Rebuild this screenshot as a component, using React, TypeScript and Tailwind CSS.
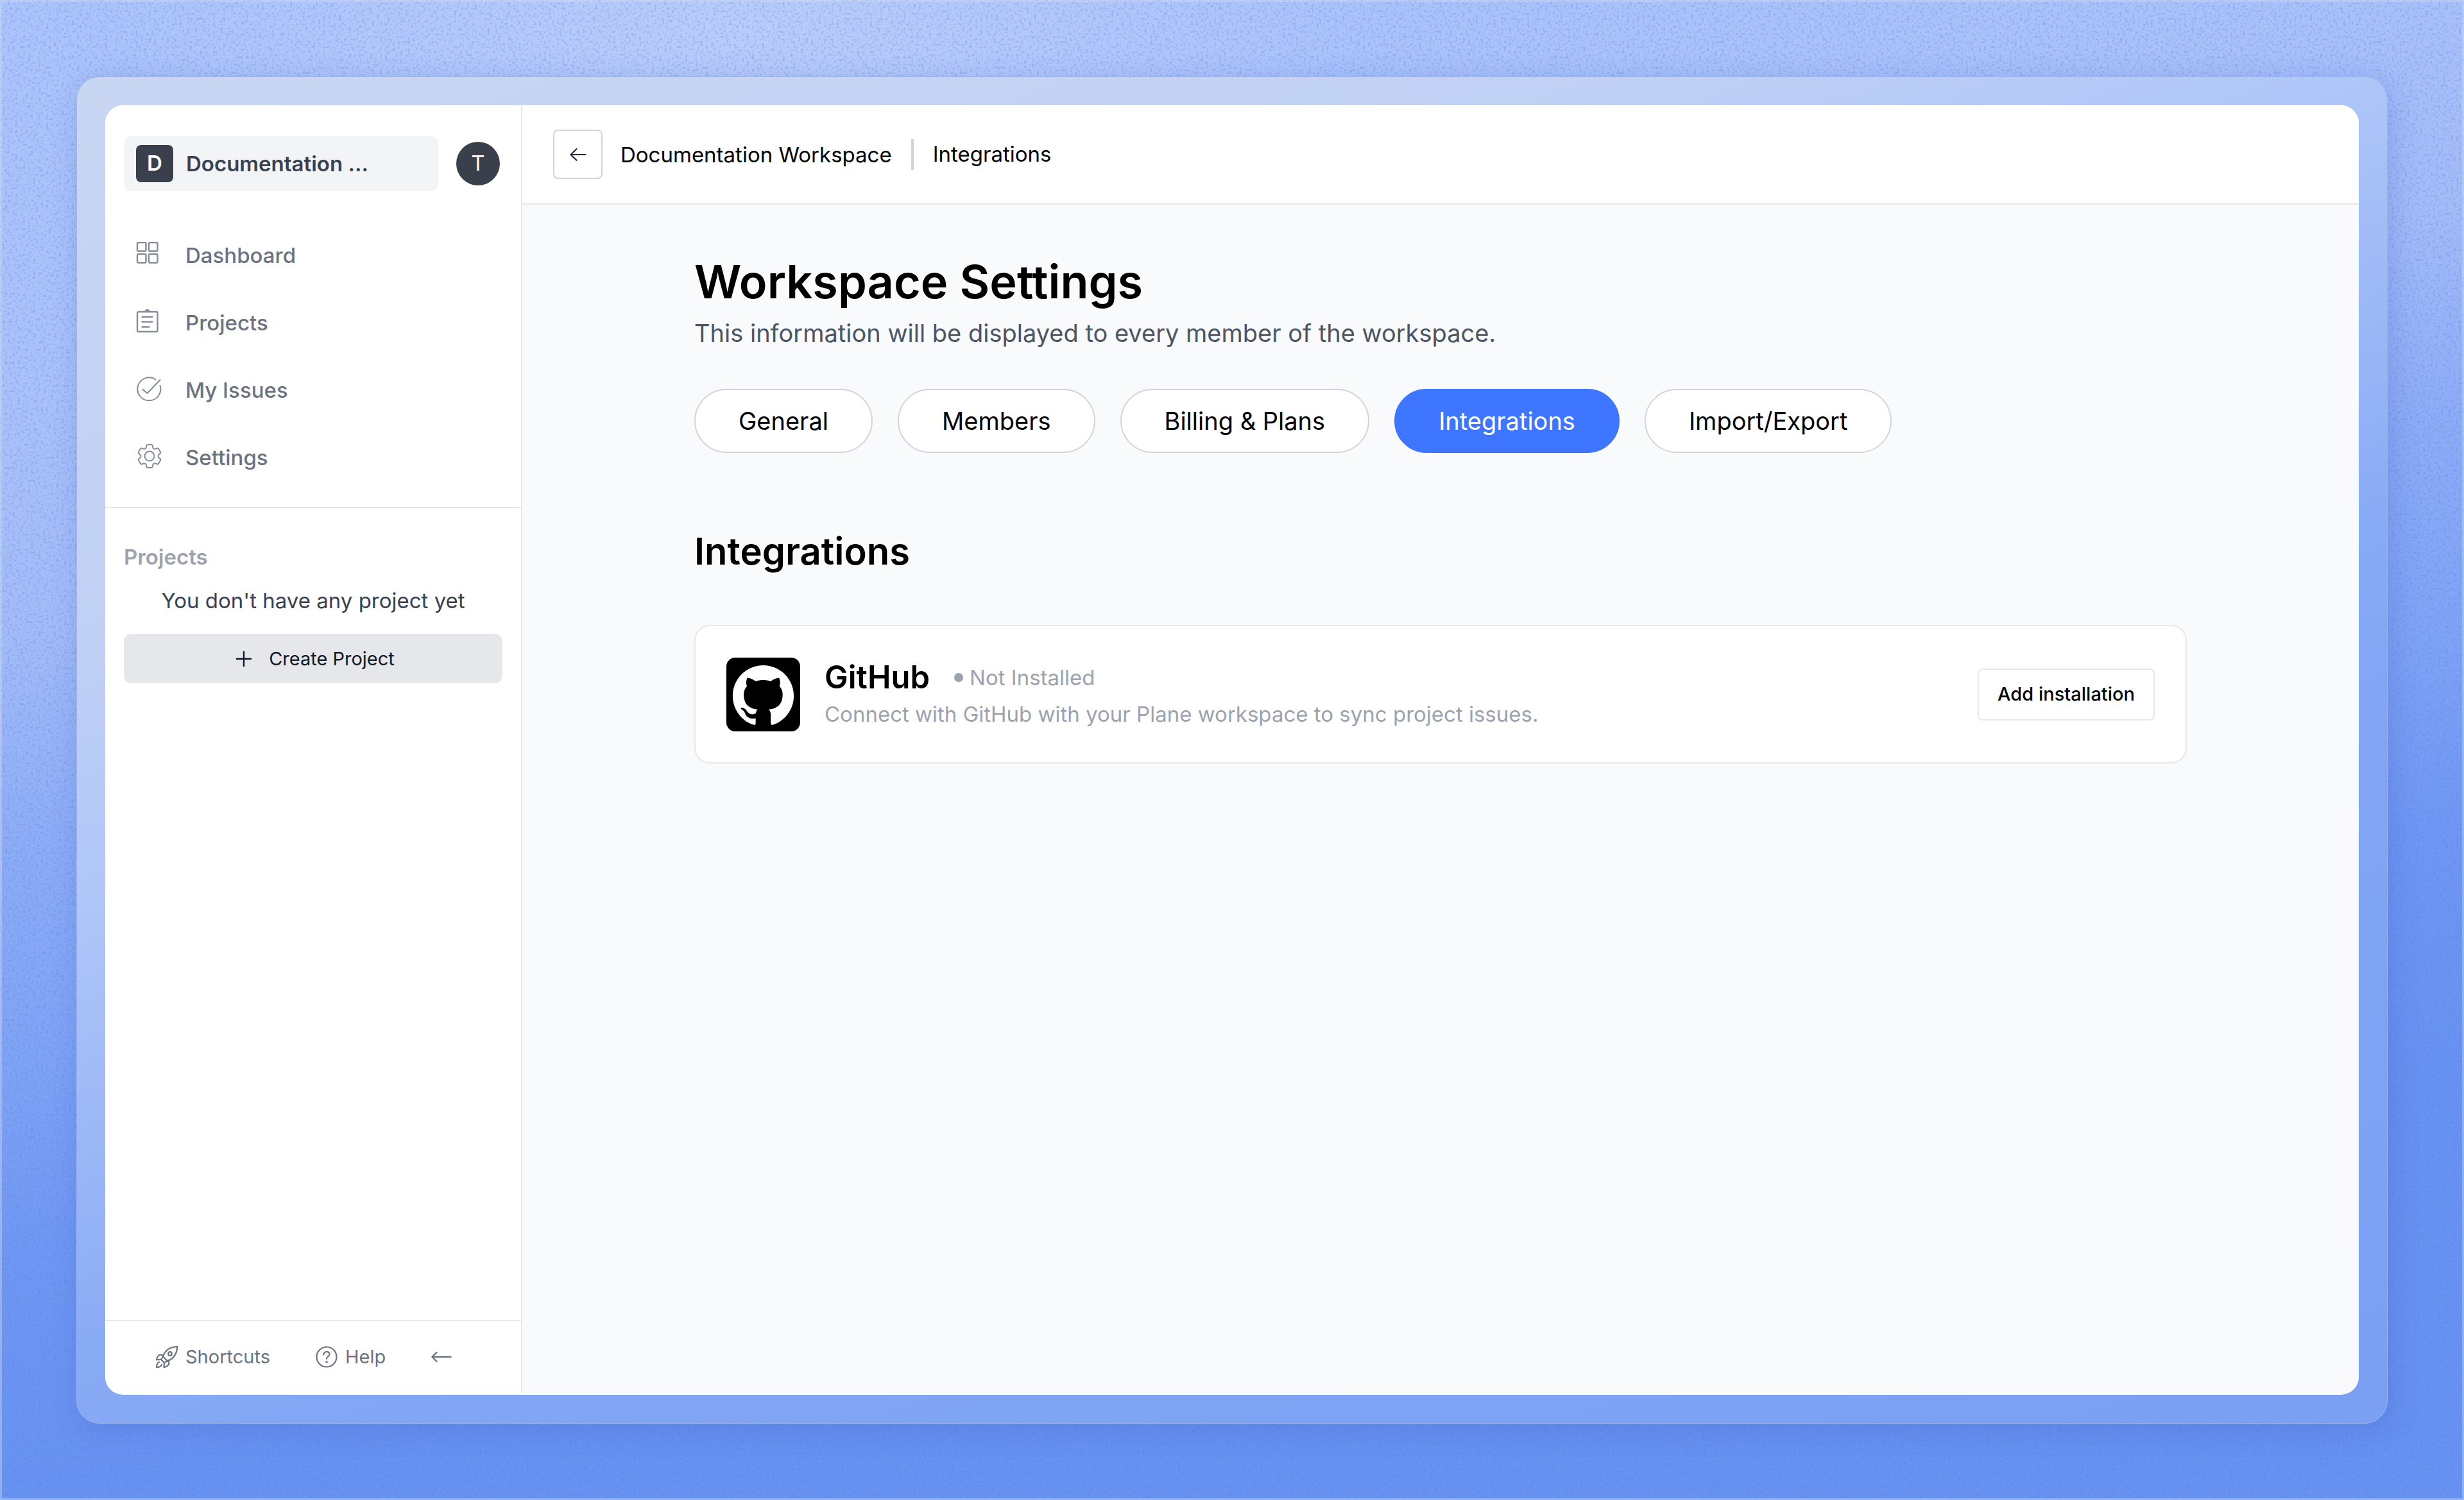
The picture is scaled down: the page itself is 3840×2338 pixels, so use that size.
import { Plus } from "lucide-react";

const NAV = ["Dashboard", "Projects", "My Issues", "Settings"] as const;
const TABS = ["General", "Members", "Billing & Plans", "Integrations", "Import/Export"];

const stroke = {
  fill: "none",
  stroke: "currentColor",
  strokeLinecap: "round" as const,
  strokeLinejoin: "round" as const,
};

function GridIcon() {
  return (
    <svg viewBox="0 0 40 40" className="size-10" strokeWidth="2.400" {...stroke} aria-hidden="true">
      <rect x="2" y="1" width="13.500" height="13.500" rx="2" />
      <rect x="20" y="1" width="13.500" height="13.500" rx="2" />
      <rect x="2" y="19" width="13.500" height="13.500" rx="2" />
      <rect x="20" y="19" width="13.500" height="13.500" rx="2" />
    </svg>
  );
}

function ClipboardIcon() {
  return (
    <svg viewBox="0 0 40 40" className="size-10" strokeWidth="2.400" {...stroke} aria-hidden="true">
      <rect x="2" y="4" width="31.500" height="31" rx="2" />
      <path d="M14.500 4a3 3 0 0 1 6 0M9.500 12h16M9.500 19.500h16M9.500 27.500h11" />
    </svg>
  );
}

function CheckIcon() {
  return (
    <svg viewBox="0 0 40 40" className="size-10" strokeWidth="2" {...stroke} aria-hidden="true">
      <path d="M30.500 4.500A18 18 0 1 0 37.500 14M10.500 20l7 6L37.500 5" />
    </svg>
  );
}

function GearIcon() {
  return (
    <svg viewBox="1.5 2.5 20 20" className="size-10" strokeWidth="1" {...stroke} aria-hidden="true">
      <path d="M9.594 3.940c.09-.542.56-.940 1.110-.940h2.593c.550 0 1.020.398 1.110.940l.213 1.281c.063.374.313.686.645.870.074.040.147.083.220.127.325.196.720.257 1.075.124l1.217-.456a1.125 1.125 0 0 1 1.370.490l1.296 2.247a1.125 1.125 0 0 1-.260 1.431l-1.003.827c-.293.241-.438.613-.430.992a7.723 7.723 0 0 1 0 .255c-.008.378.137.750.430.991l1.004.827c.424.350.534.955.260 1.430l-1.298 2.247a1.125 1.125 0 0 1-1.369.491l-1.217-.456c-.355-.133-.750-.072-1.076.124a6.470 6.470 0 0 1-.220.128c-.331.183-.581.495-.644.869l-.213 1.281c-.090.543-.560.940-1.110.940h-2.594c-.550 0-1.019-.398-1.110-.940l-.213-1.281c-.062-.374-.312-.686-.644-.870a6.520 6.520 0 0 1-.220-.127c-.325-.196-.720-.257-1.076-.124l-1.217.456a1.125 1.125 0 0 1-1.369-.490l-1.297-2.247a1.125 1.125 0 0 1 .260-1.431l1.004-.827c.292-.240.437-.613.430-.991a6.932 6.932 0 0 1 0-.255c.007-.380-.138-.751-.430-.992l-1.004-.827a1.125 1.125 0 0 1-.260-1.430l1.297-2.247a1.125 1.125 0 0 1 1.370-.491l1.216.456c.356.133.751.072 1.076-.124.072-.044.146-.086.220-.128.332-.183.582-.495.644-.869l.214-1.280Z" />
      <circle cx="12" cy="12" r="3.700" />
    </svg>
  );
}

function RocketIcon() {
  return (
    <svg viewBox="0 0 34 34" className="size-[34px]" strokeWidth="2.200" {...stroke} aria-hidden="true">
      <path d="M11 16.500C14 7 22 1.500 33 1c0 11-5.500 18.500-15 22.500Z" />
      <path d="M12 14.500 6.500 13.500C3 15 1.500 18 1 21.500l7-.500M19.500 22l1 5.500c-1.500 3.500-4 5-8 5.500l.500-7" />
      <path d="M11 16.500 8 21l5 5 5-2.500" />
      <circle cx="22" cy="12" r="2.800" />
      <path d="M5 25c-3 1-4 4-4 8 4 0 7-1 8-4" />
    </svg>
  );
}

function HelpIcon() {
  return (
    <svg viewBox="0 0 34 34" className="size-[34px]" strokeWidth="2.200" {...stroke} aria-hidden="true">
      <circle cx="17" cy="17" r="15.500" />
      <path d="M12.500 13.500c0-6 9-6 9-.5 0 3.500-4.500 3.500-4.500 7" />
      <circle cx="17" cy="25" r="0.700" fill="currentColor" />
    </svg>
  );
}

function LongArrow() {
  return (
    <svg viewBox="0 0 32 18" className="h-[18px] w-8" strokeWidth="2.400" {...stroke} aria-hidden="true">
      <path d="M30.500 9H1.500M8.500 2l-7 7 7 7" />
    </svg>
  );
}

function BackArrow() {
  return (
    <svg viewBox="0 0 26 20" className="h-5 w-[26px]" strokeWidth="2.200" {...stroke} aria-hidden="true">
      <path d="M24.500 10H1.500M10.500 1.200 1.500 10l9 8.800" />
    </svg>
  );
}

function GithubLogo() {
  return (
    <svg viewBox="0 0 116 116" className="size-[115px] shrink-0" role="img" aria-label="GitHub">
      <rect width="116" height="116" rx="14" fill="#000" />
      <g transform="translate(10 11) scale(4)">
        <path
          fill="#fff"
          d="M12 .297c-6.630 0-12 5.373-12 12 0 5.303 3.438 9.800 8.205 11.385.600.113.820-.258.820-.577 0-.285-.010-1.040-.015-2.040-3.338.724-4.042-1.610-4.042-1.610C4.422 18.070 3.633 17.700 3.633 17.700c-1.087-.744.084-.729.084-.729 1.205.084 1.838 1.236 1.838 1.236 1.070 1.835 2.809 1.305 3.495.998.108-.776.417-1.305.760-1.605-2.665-.300-5.466-1.332-5.466-5.930 0-1.310.465-2.380 1.235-3.220-.135-.303-.540-1.523.105-3.176 0 0 1.005-.322 3.300 1.230.960-.267 1.980-.399 3-.405 1.020.006 2.040.138 3 .405 2.280-1.552 3.285-1.230 3.285-1.230.645 1.653.240 2.873.120 3.176.765.840 1.230 1.910 1.230 3.220 0 4.610-2.805 5.625-5.475 5.920.420.360.810 1.096.810 2.220 0 1.606-.015 2.896-.015 3.286 0 .315.210.690.825.570C20.565 22.092 24 17.592 24 12.297c0-6.627-5.373-12-12-12"
        />
      </g>
    </svg>
  );
}

const NAV_ICONS = {
  Dashboard: GridIcon,
  Projects: ClipboardIcon,
  "My Issues": CheckIcon,
  Settings: GearIcon,
};

function Grain() {
  return (
    <svg className="pointer-events-none absolute inset-0 size-full" aria-hidden="true">
      <filter id="grain" x="0" y="0" width="100%" height="100%" colorInterpolationFilters="sRGB">
        <feTurbulence type="fractalNoise" baseFrequency="0.25" numOctaves="3" seed="4" />
        <feColorMatrix values="0 0 0 0 0.36  0 0 0 0 0.5  0 0 0 0 0.85  4 0 0 0 -2" />
      </filter>
      <rect width="100%" height="100%" filter="url(#grain)" opacity="0.3" />
    </svg>
  );
}

function Sidebar() {
  return (
    <aside className="flex w-[650px] shrink-0 flex-col border-r-2 border-[#e5e7eb] bg-white">
      <div className="flex items-center gap-7 pt-12 pr-[33px] pl-[29px]">
        <button className="flex h-[86px] flex-1 items-center gap-5 rounded-xl bg-[#f3f4f6] px-[19px] text-left">
          <span className="flex size-[58px] items-center justify-center rounded-lg bg-[#3a404b] text-[33px] font-semibold text-white">
            D
          </span>
          <span className="text-[33px] leading-12 font-semibold text-[#374151]">Documentation ...</span>
        </button>
        <button className="flex size-[68px] items-center justify-center rounded-full bg-[#3a404b] text-[33px] text-white">
          T
        </button>
      </div>
      <nav className="mt-12 flex flex-col border-b-2 border-[#e5e7eb] pb-6">
        {NAV.map((name) => {
          const Icon = NAV_ICONS[name];
          return (
            <a key={name} href="#" className="flex h-[105px] items-center pl-12 text-[33px] font-medium text-[#6b7280]">
              <span className="flex w-[77px] items-center pb-1 text-[#858c98]">
                <Icon />
              </span>
              {name}
            </a>
          );
        })}
      </nav>
      <section className="flex flex-1 flex-col px-[29px] pt-[52px]">
        <h2 className="text-[33px] leading-12 font-semibold text-[#9ca3af]">Projects</h2>
        <p className="mt-5 text-center text-[33px] leading-12 text-[#374151]">You don't have any project yet</p>
        <button className="mt-7 flex h-[77px] items-center justify-center gap-5 rounded-xl bg-[#e5e7eb] text-[29px] text-[#111827]">
          <Plus className="size-[38px]" strokeWidth={1.5} aria-hidden="true" />
          Create Project
        </button>
      </section>
      <footer className="flex h-[114px] items-center border-t-2 border-[#e5e7eb] pl-[79px] text-[29px] text-[#6b7280]">
        <button className="flex items-center gap-3">
          <RocketIcon />
          Shortcuts
        </button>
        <button className="ml-[71px] flex items-center gap-3">
          <HelpIcon />
          Help
        </button>
        <button className="ml-[71px]" aria-label="Collapse sidebar">
          <LongArrow />
        </button>
      </footer>
    </aside>
  );
}

export default function App() {
  return (
    <div className="relative flex min-h-screen bg-[radial-gradient(ellipse_1000px_300px_at_30%_2%,rgba(190,207,251,0.8),transparent),linear-gradient(170deg,#abc4fb_0%,#a9c2fa_20%,#a3bcf8_33%,#8dacf6_44%,#7fa3f5_55%,#6f97f3_65%,#6792f1_78%,#6792f1_100%)] p-[119px] font-[Inter,sans-serif] text-black">
      <Grain />
      <div className="pointer-events-none absolute inset-0 border-[3px] border-[#d3dcf3]/40" />
      <div className="relative flex flex-1 rounded-[36px] border border-[#9db4ea] bg-[linear-gradient(160deg,#c9d6f3_0%,#c0d0f4_26%,#b0c7f8_37%,#a0bbf6_46%,#8aabf5_58%,#82a6f4_66%,#7a9ff3_100%)] p-11 shadow-[6px_10px_44px_rgba(50,80,190,0.24)]">
        <div className="flex flex-1 overflow-hidden rounded-[28px] bg-white pb-[3px]">
          <Sidebar />
          <main className="flex-1 bg-[#f9fafc]">
            <header className="flex h-[155px] items-center border-b-2 border-[#e5e7eb] bg-white pl-12 text-[33px]">
              <button
                aria-label="Back"
                className="flex size-[77px] items-center justify-center rounded-lg border-2 border-[#d1d5db] text-[#1f2937]"
              >
                <BackArrow />
              </button>
              <a href="#" className="ml-7 border-r-4 border-[#d1d5db] pr-[30px] leading-12">
                Documentation Workspace
              </a>
              <span className="pl-[30px]">Integrations</span>
            </header>
            <div className="px-[268px] pt-[76px]">
              <h1 className="text-[72px] leading-[87px] font-semibold">Workspace Settings</h1>
              <p className="mt-2 text-[38px] leading-[58px] text-[#4b5563]">
                This information will be displayed to every member of the workspace.
              </p>
              <div className="mt-[58px] flex gap-[39px]">
                {TABS.map((tab) => (
                  <button
                    key={tab}
                    className={
                      tab === "Integrations"
                        ? "h-[100px] rounded-full border-2 border-[#3f76ff] bg-[#3f76ff] px-[67px] text-[38px] text-white"
                        : "h-[100px] rounded-full border-2 border-[#d1d5db] bg-white px-[67px] text-[38px]"
                    }
                  >
                    {tab}
                  </button>
                ))}
              </div>
              <h2 className="mt-[115px] text-[58px] leading-[77px] font-semibold">Integrations</h2>
              <article className="mt-[76px] flex items-center gap-[38px] rounded-3xl border-2 border-[#e5e7eb] bg-white px-12 py-[47px]">
                <GithubLogo />
                <div className="flex-1 pt-1">
                  <div className="flex items-center gap-[38px]">
                    <h3 className="text-[49px] leading-[58px] font-semibold">GitHub</h3>
                    <span className="flex items-center gap-[10px] text-[33px] leading-12 text-[#9ca3af]">
                      <span className="size-[14px] rounded-full bg-[#9ca3af]" />
                      Not Installed
                    </span>
                  </div>
                  <p className="text-[33px] leading-[56px] text-[#9ca3af]">
                    Connect with GitHub with your Plane workspace to sync project issues.
                  </p>
                </div>
                <button className="h-[81px] rounded-lg border-2 border-[#e5e7eb] px-[29px] text-[29px] font-medium">
                  Add installation
                </button>
              </article>
            </div>
          </main>
        </div>
      </div>
    </div>
  );
}
